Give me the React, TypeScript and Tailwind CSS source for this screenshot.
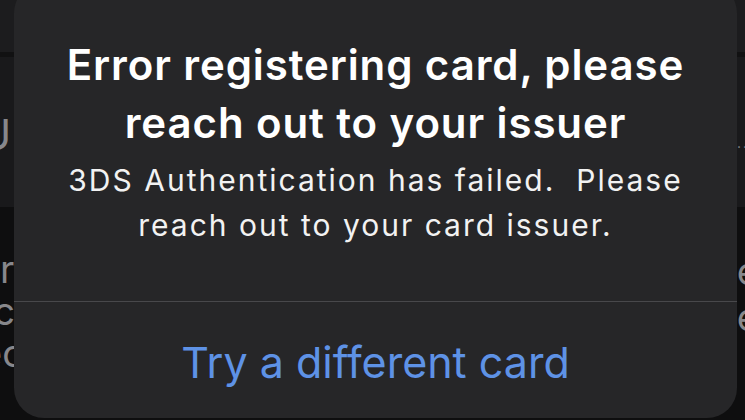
export default function App() {
  return (
    <div
      className="relative w-[745px] h-[420px] overflow-hidden bg-[#0e0e0f]"
      style={{ fontFamily: "Inter, 'Noto Sans', sans-serif" }}
    >
      {/* dimmed screen behind the alert */}
      <div className="flex flex-col w-full text-[#87878b]">
        <div className="h-[52px] bg-[#1c1c1e]" />
        <div className="h-[5px] bg-[#111112]" />
        <div className="h-[150px] bg-[#19191b] flex items-center justify-between">
          <span className="-ml-[20px] text-[42px] leading-none pt-[6px]">U</span>
          <span className="mr-[-4px] text-[14px] tracking-[2px] leading-none pt-[30px]">···</span>
        </div>
        <div className="flex justify-between pt-[41px]">
          <div className="-ml-[10px] flex flex-col text-[38px] leading-[42px]">
            <span className="ml-[10px]">r</span>
            <span className="-ml-[6px]">ic</span>
            <span className="-ml-[10px]">ec</span>
          </div>
          <div className="-mr-[14px] flex flex-col text-[38px] leading-[46px]">
            <span>e</span>
            <span>e</span>
          </div>
        </div>
      </div>

      {/* alert */}
      <div className="absolute left-[14px] top-[-17px] w-[723px] h-[435px] rounded-[30px] bg-[#262628] flex flex-col">
        <div className="pt-[53px] px-[10px] text-center">
          <h1 className="text-[42px] leading-[58px] font-semibold tracking-[0.9px] text-white">
            Error registering card, please
            <br />
            reach out to your issuer
          </h1>
          <p className="mt-[6px] text-[30px] leading-[45px] tracking-[2px] text-[#f2f2f2] whitespace-pre">
            {"3DS Authentication has failed.  Please\nreach out to your card issuer."}
          </p>
        </div>
        <div className="mt-auto h-px bg-[#48484b]" />
        <button className="h-[116px] flex items-center justify-center pt-[4px] text-[43px] leading-[53px] text-[#5e92e6]">
          Try a different card
        </button>
      </div>
    </div>
  );
}
